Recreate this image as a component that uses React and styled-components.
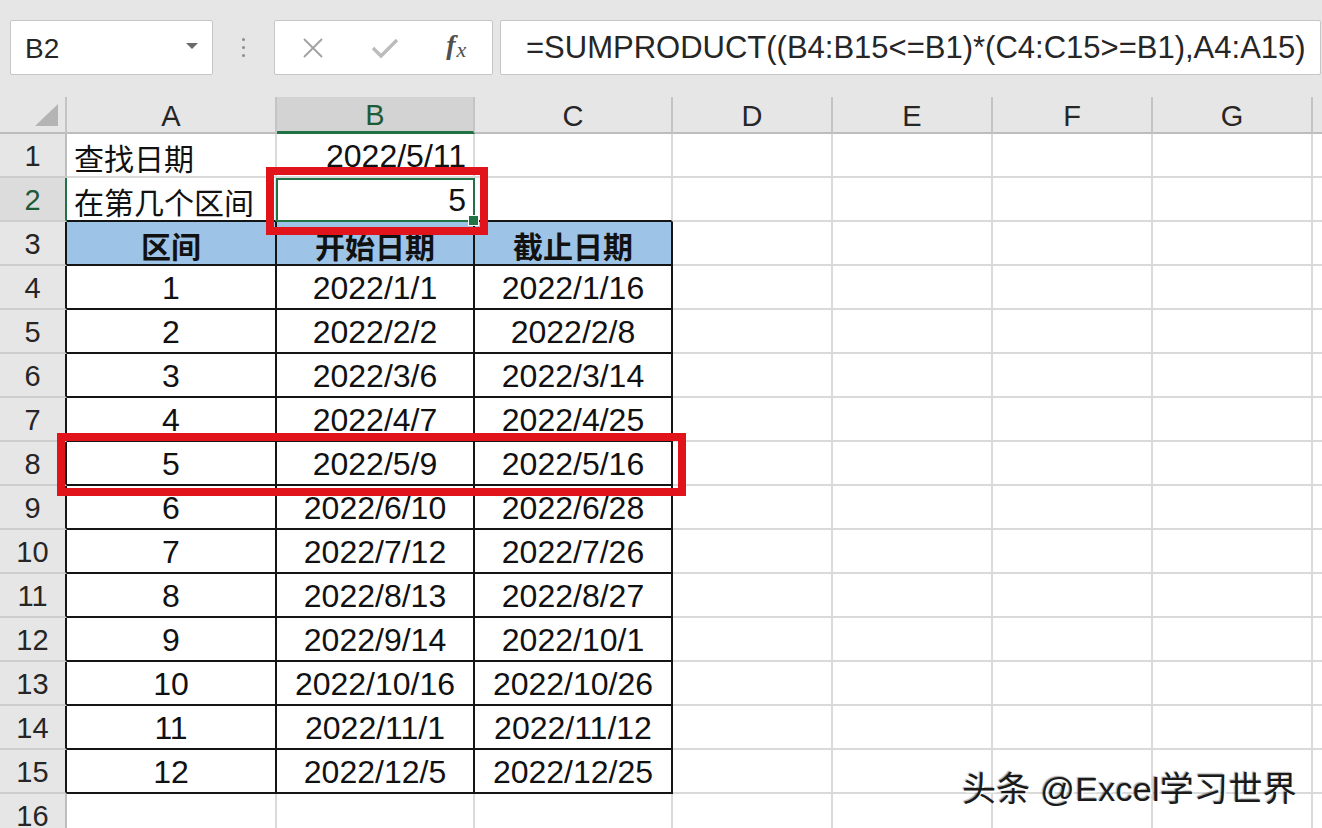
import React from "react";
import styled, { createGlobalStyle } from "styled-components";

const GlobalStyle = createGlobalStyle`
  html, body { margin: 0; padding: 0; background: #fff; overflow: hidden; }
  #root { width: 1322px; height: 828px; }
`;

const Page = styled.div`
  position: relative;
  width: 1322px;
  height: 828px;
  overflow: hidden;
  background: #fff;
  font-family: "Liberation Sans", "Noto Sans CJK SC", sans-serif;
`;

const TopBar = styled.div`
  height: 97px;
  box-sizing: border-box;
  background: #e6e6e6;
  display: flex;
  align-items: flex-start;
  padding: 20px 0 0 10px;
`;

const Box = styled.div`
  box-sizing: border-box;
  height: 55px;
  background: #fff;
  border: 1px solid #c6c6c6;
  border-radius: 2px;
  display: flex;
  align-items: center;
`;

const NameBox = styled(Box)`
  width: 203px;
  padding: 2px 14px 0 14px;
  justify-content: space-between;
  font-size: 28px;
  color: #262626;
`;

const DropArrow = styled.span`
  width: 0;
  height: 0;
  border-left: 6px solid transparent;
  border-right: 6px solid transparent;
  border-top: 6px solid #6b6b6b;
  margin-top: -6px;
`;

const Splitter = styled.div`
  width: 61px;
  height: 55px;
  display: flex;
  flex-direction: column;
  align-items: center;
  justify-content: center;
  gap: 5px;
`;

const Dot = styled.span`
  width: 3px;
  height: 3px;
  border-radius: 50%;
  background: #8c8c8c;
`;

const ButtonBox = styled(Box)`
  width: 219px;
  padding-left: 2px;
`;

const IconSlot = styled.div`
  width: 72px;
  height: 100%;
  display: flex;
  align-items: center;
  justify-content: center;
`;

const Fx = styled.span`
  font-family: "Liberation Serif", serif;
  font-style: italic;
  font-weight: 700;
  font-size: 28px;
  color: #505050;
  margin-top: -6px;
  & span {
    font-size: 22px;
    font-weight: 400;
    position: relative;
    top: 3px;
    margin-left: 1px;
  }
`;

const FormulaBox = styled(Box)`
  flex: 1;
  margin-left: 7px;
  margin-right: 1px;
  padding: 0 0 0 25px;
  font-size: 31px;
  color: #262626;
  white-space: nowrap;
  overflow: hidden;
`;

const Grid = styled.div`
  display: grid;
  grid-template-columns: 67px 210px 198px 198px 160px 160px 160px 160px 1fr;
  grid-template-rows: 37px repeat(16, 44px);
`;

const Corner = styled.div`
  box-sizing: border-box;
  background: #e6e6e6;
  border-right: 2px solid #c4c4c4;
  border-bottom: 2px solid #bdbdbd;
  display: flex;
  align-items: flex-end;
  justify-content: flex-end;
  padding: 0 7px 6px 0;
`;

const ColHead = styled.div`
  box-sizing: border-box;
  background: ${p => (p.$sel ? "#d3d3d3" : "#e6e6e6")};
  border-right: 2px solid #c4c4c4;
  border-bottom: ${p => (p.$sel ? "3px solid #217346" : "2px solid #bdbdbd")};
  display: flex;
  align-items: center;
  justify-content: center;
  padding-top: 3px;
  font-size: 29px;
  color: ${p => (p.$sel ? "#1e5a38" : "#262626")};
`;

const RowHead = styled.div`
  box-sizing: border-box;
  background: ${p => (p.$sel ? "#dcdcdc" : "#e6e6e6")};
  border-right: 2px solid ${p => p.$r};
  border-bottom: 2px solid #cdcdcd;
  display: flex;
  align-items: center;
  justify-content: center;
  padding-top: 2px;
  font-size: 29px;
  color: ${p => (p.$sel ? "#1e5a38" : "#262626")};
`;

const Cell = styled.div`
  box-sizing: border-box;
  position: relative;
  display: flex;
  align-items: center;
  justify-content: ${p =>
    p.$align === "left" ? "flex-start" : p.$align === "right" ? "flex-end" : "center"};
  padding: 3px 7px 0 7px;
  background: ${p => p.$bg || "#fff"};
  border-right: 2px solid ${p => p.$r || "#dadada"};
  border-bottom: 2px solid ${p => p.$b || "#dadada"};
  font-family: ${p =>
    p.$cjk ? '"Noto Sans CJK SC", sans-serif' : '"Liberation Sans", "Noto Sans CJK SC", sans-serif'};
  font-size: ${p => (p.$cjk ? "30px" : "32px")};
  font-weight: ${p => (p.$bold ? 700 : 400)};
  color: #111;
  white-space: nowrap;
`;

const SelectionFrame = styled.div`
  position: absolute;
  left: -1px;
  top: 0;
  right: -2px;
  bottom: -2px;
  border: 2px solid #217346;
  pointer-events: none;
  z-index: 2;
`;

const FillHandle = styled.div`
  position: absolute;
  right: -6px;
  bottom: -6px;
  width: 9px;
  height: 9px;
  background: #217346;
  border: 1px solid #fff;
`;

const RedBox = styled.div`
  position: absolute;
  box-sizing: border-box;
  border: 8px solid #e1141c;
  pointer-events: none;
  z-index: 3;
`;

const Watermark = styled.div`
  position: absolute;
  left: 962px;
  top: 762px;
  font-family: "Liberation Sans", "Noto Sans CJK SC", sans-serif;
  font-size: 34px;
  letter-spacing: 0.3px;
  color: #1a1a1a;
  white-space: nowrap;
  z-index: 4;
  text-shadow: 2px 2px 1px rgba(255, 255, 255, 0.95), -1px -1px 1px rgba(0, 0, 0, 0.35);
`;

const BLACK = "#151515";
const GRID = "#dadada";

const cols = ["A", "B", "C", "D", "E", "F", "G", ""];

const table = [
  ["1", "2022/1/1", "2022/1/16"],
  ["2", "2022/2/2", "2022/2/8"],
  ["3", "2022/3/6", "2022/3/14"],
  ["4", "2022/4/7", "2022/4/25"],
  ["5", "2022/5/9", "2022/5/16"],
  ["6", "2022/6/10", "2022/6/28"],
  ["7", "2022/7/12", "2022/7/26"],
  ["8", "2022/8/13", "2022/8/27"],
  ["9", "2022/9/14", "2022/10/1"],
  ["10", "2022/10/16", "2022/10/26"],
  ["11", "2022/11/1", "2022/11/12"],
  ["12", "2022/12/5", "2022/12/25"],
];

function buildRows() {
  const rows = [];
  rows.push([
    { text: "查找日期", align: "left", cjk: true },
    { text: "2022/5/11", align: "right" },
    { text: "" },
  ]);
  rows.push([
    { text: "在第几个区间", align: "left", cjk: true },
    { text: "5", align: "right", selected: true },
    { text: "" },
  ]);
  rows.push([
    { text: "区间", cjk: true, bold: true, bg: "#9dc3e6" },
    { text: "开始日期", cjk: true, bold: true, bg: "#9dc3e6" },
    { text: "截止日期", cjk: true, bold: true, bg: "#9dc3e6" },
  ]);
  table.forEach(r => rows.push(r.map(t => ({ text: t }))));
  rows.push([{ text: "" }, { text: "" }, { text: "" }]);
  return rows;
}

const XIcon = () => (
  <svg width="22" height="22" viewBox="0 0 22 22">
    <path d="M2 2 L20 20 M20 2 L2 20" stroke="#a3a3a3" strokeWidth="2" fill="none" />
  </svg>
);

const CheckIcon = () => (
  <svg width="28" height="22" viewBox="0 0 28 22">
    <path d="M2 11 L10 19 L26 3" stroke="#bcbcbc" strokeWidth="3.4" fill="none" />
  </svg>
);

const CornerTriangle = () => (
  <svg width="23" height="22" viewBox="0 0 23 22">
    <polygon points="23,0 23,22 0,22" fill="#b4b4b4" />
  </svg>
);

export default function App() {
  const rows = buildRows();
  return (
    <>
      <GlobalStyle />
      <Page>
        <TopBar>
          <NameBox>
            <span>B2</span>
            <DropArrow />
          </NameBox>
          <Splitter>
            <Dot />
            <Dot />
            <Dot />
          </Splitter>
          <ButtonBox>
            <IconSlot><XIcon /></IconSlot>
            <IconSlot><CheckIcon /></IconSlot>
            <IconSlot>
              <Fx>f<span>x</span></Fx>
            </IconSlot>
          </ButtonBox>
          <FormulaBox>=SUMPRODUCT((B4:B15&lt;=B1)*(C4:C15&gt;=B1),A4:A15)</FormulaBox>
        </TopBar>

        <Grid>
          <Corner><CornerTriangle /></Corner>
          {cols.map((c, i) => (
            <ColHead key={"h" + i} $sel={c === "B"}>{c}</ColHead>
          ))}
          {rows.map((row, ri) => {
            const r = ri + 1;
            const inTable = r >= 3 && r <= 15;
            const tableTopEdge = r === 2;
            return (
              <React.Fragment key={"r" + r}>
                <RowHead $sel={r === 2} $r={inTable ? BLACK : r === 2 ? "#217346" : "#bdbdbd"}>
                  {r}
                </RowHead>
                {row.map((cell, ci) => {
                  const right = inTable ? BLACK : GRID;
                  const bottom = inTable || tableTopEdge ? BLACK : GRID;
                  return (
                    <Cell
                      key={"c" + ci}
                      $align={cell.align}
                      $cjk={cell.cjk}
                      $bold={cell.bold}
                      $bg={cell.bg}
                      $r={right}
                      $b={bottom}
                    >
                      {cell.text}
                      {cell.selected && (
                        <SelectionFrame>
                          <FillHandle />
                        </SelectionFrame>
                      )}
                    </Cell>
                  );
                })}
                {[0, 1, 2, 3, 4].map(k => (
                  <Cell key={"e" + k} />
                ))}
              </React.Fragment>
            );
          })}
        </Grid>

        <RedBox style={{ left: 266, top: 167, width: 222, height: 68 }} />
        <RedBox style={{ left: 57, top: 433, width: 629, height: 63 }} />
        <Watermark>头条 @Excel学习世界</Watermark>
      </Page>
    </>
  );
}
